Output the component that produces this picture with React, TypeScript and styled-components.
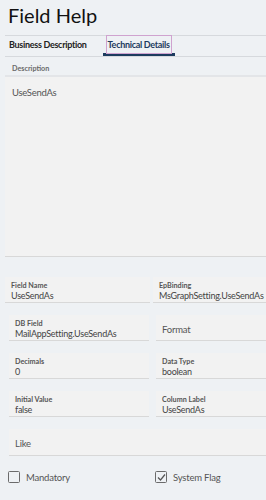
import React from "react";
import styled, { createGlobalStyle } from "styled-components";

const Global = createGlobalStyle`
  html, body { margin: 0; padding: 0; background: #eef1f4; }
  body { font-family: Lato, "Liberation Sans", sans-serif; color: #333; }
  * { box-sizing: border-box; }
`;

const Page = styled.div`
  width: 266px;
  height: 500px;
  padding-left: 5px;
  overflow: hidden;
`;

const Header = styled.div`
  height: 36px;
  border-bottom: 1px solid #d6d9dd;
  padding: 2px 0 0 3px;
`;

const Title = styled.h1`
  margin: 0;
  font-weight: 400;
  font-size: 20px;
  line-height: 26px;
  color: #111;
`;

const TabBar = styled.div`
  height: 21px;
  border-bottom: 1px solid #d6d9dd;
  display: flex;
  align-items: stretch;
  padding-left: 1px;
  gap: 13px;
`;

const Tab = styled.div<{ $active?: boolean }>`
  font-size: 9px;
  font-weight: 700;
  letter-spacing: -0.3px;
  display: flex;
  align-items: center;
  padding: 0 3px;
  color: ${(p) => (p.$active ? "#1d3b5e" : "#222")};
  border-bottom: 3px solid ${(p) => (p.$active ? "#1d3b5e" : "transparent")};
`;

const Focus = styled.span`
  border: 1px solid #cfa3cf;
  padding: 3px 1px 3px;
`;

const DescLabel = styled.div`
  font-size: 7.2px;
  font-weight: 700;
  color: #6a6a6a;
  padding: 7px 0 0 7px;
  height: 18px;
`;

const DescBox = styled.div`
  height: 182px;
  background: #f2f2f2;
  border-top: 2px solid #e3e5e8;
  border-bottom: 1px solid #d8d8d8;
  padding: 10px 7px;
  font-size: 9.5px;
  letter-spacing: -0.3px;
  color: #555;
`;

const Grid = styled.div<{ $indent?: boolean }>`
  display: grid;
  grid-template-columns: ${(p) => (p.$indent ? "140px 1fr" : "145px 1fr")};
  column-gap: ${(p) => (p.$indent ? "7px" : "3px")};
  margin-left: ${(p) => (p.$indent ? "4px" : "0")};
  margin-top: ${(p) => (p.$indent ? "12px" : "20px")};
`;

const Field = styled.div<{ $indent?: boolean }>`
  height: 26px;
  background: #f2f2f2;
  border-bottom: 1px solid #d8d8d8;
  padding: 3px 4px 0 ${(p) => (p.$indent ? "6px" : "6px")};
  display: flex;
  flex-direction: column;
  justify-content: center;
  min-width: 0;
`;

const Label = styled.div`
  font-size: 7.2px;
  font-weight: 700;
  color: #555;
  line-height: 9px;
`;

const Value = styled.div`
  font-size: 9px;
  letter-spacing: -0.25px;
  color: #444;
  line-height: 12px;
  white-space: nowrap;
`;

const Placeholder = styled.div`
  font-size: 9.5px;
  letter-spacing: -0.2px;
  color: #555;
`;

const FullField = styled(Field)`
  margin: 12px 0 0 4px;
  height: 27px;
`;

const Checks = styled.div`
  display: grid;
  grid-template-columns: 147px 1fr;
  margin: 15px 0 0 3px;
`;

const CheckItem = styled.label`
  display: flex;
  align-items: center;
  gap: 6px;
  font-size: 9.5px;
  letter-spacing: -0.2px;
  color: #555;
`;

const Box = styled.span`
  width: 12px;
  height: 12px;
  border: 1.5px solid #6b6b6b;
  border-radius: 1.5px;
  display: inline-flex;
  align-items: center;
  justify-content: center;
`;

const Check = () => (
  <svg width="9" height="9" viewBox="0 0 9 9">
    <path d="M1 4.5 L3.5 7 L8 1.5" fill="none" stroke="#555" strokeWidth="1.2" />
  </svg>
);

export default function App() {
  return (
    <Page>
      <Global />
      <Header>
        <Title>Field Help</Title>
      </Header>
      <TabBar>
        <Tab>Business Description</Tab>
        <Tab $active>
          <Focus>Technical Details</Focus>
        </Tab>
      </TabBar>
      <DescLabel>Description</DescLabel>
      <DescBox>UseSendAs</DescBox>
      <Grid>
        <Field>
          <Label>Field Name</Label>
          <Value>UseSendAs</Value>
        </Field>
        <Field>
          <Label>EpBinding</Label>
          <Value>MsGraphSetting.UseSendAs</Value>
        </Field>
      </Grid>
      <Grid $indent>
        <Field $indent>
          <Label>DB Field</Label>
          <Value>MailAppSetting.UseSendAs</Value>
        </Field>
        <Field $indent>
          <Placeholder>Format</Placeholder>
        </Field>
      </Grid>
      <Grid $indent>
        <Field $indent>
          <Label>Decimals</Label>
          <Value>0</Value>
        </Field>
        <Field $indent>
          <Label>Data Type</Label>
          <Value>boolean</Value>
        </Field>
      </Grid>
      <Grid $indent>
        <Field $indent>
          <Label>Initial Value</Label>
          <Value>false</Value>
        </Field>
        <Field $indent>
          <Label>Column Label</Label>
          <Value>UseSendAs</Value>
        </Field>
      </Grid>
      <FullField $indent>
        <Placeholder>Like</Placeholder>
      </FullField>
      <Checks>
        <CheckItem>
          <Box />
          Mandatory
        </CheckItem>
        <CheckItem>
          <Box>
            <Check />
          </Box>
          System Flag
        </CheckItem>
      </Checks>
    </Page>
  );
}
